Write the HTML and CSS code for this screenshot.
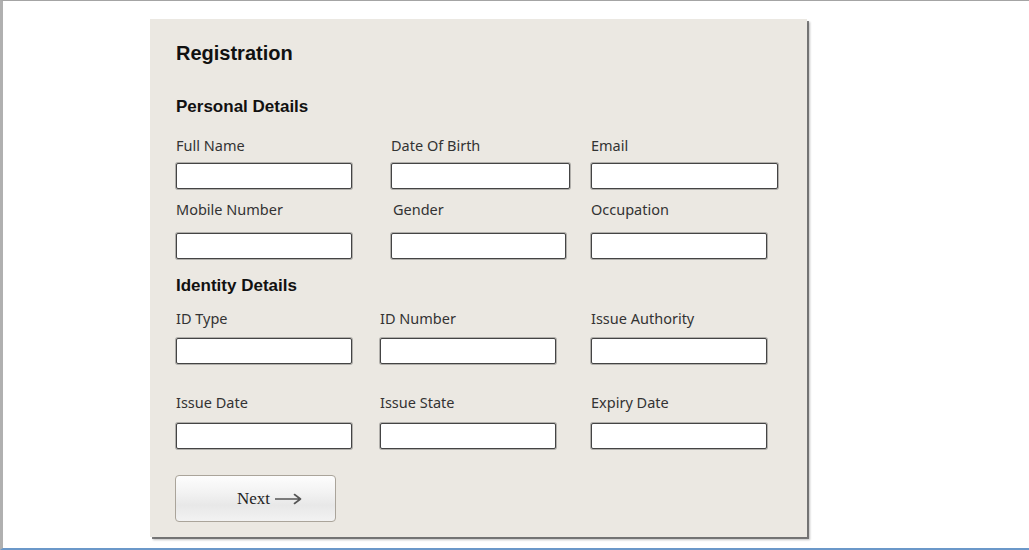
FILE: index.html
```html
<!DOCTYPE html>
<html lang="en">
<head>
<meta charset="utf-8">
<title>Registration</title>
<link rel="stylesheet" href="styles.css">
</head>
<body>
<div class="frame">
  <div class="panel">
    <h1 class="title">Registration</h1>

    <h2 class="section">Personal Details</h2>
    <div class="row row-personal row-a">
      <div class="field"><div class="label">Full Name</div><div class="input"></div></div>
      <div class="field"><div class="label">Date Of Birth</div><div class="input w179"></div></div>
      <div class="field"><div class="label">Email</div><div class="input w187"></div></div>
    </div>
    <div class="row row-personal row-b">
      <div class="field"><div class="label">Mobile Number</div><div class="input"></div></div>
      <div class="field"><div class="label indent">Gender</div><div class="input w175"></div></div>
      <div class="field"><div class="label">Occupation</div><div class="input"></div></div>
    </div>

    <h2 class="section section-identity">Identity Details</h2>
    <div class="row row-identity row-c">
      <div class="field"><div class="label">ID Type</div><div class="input"></div></div>
      <div class="field"><div class="label">ID Number</div><div class="input"></div></div>
      <div class="field"><div class="label">Issue Authority</div><div class="input"></div></div>
    </div>
    <div class="row row-identity row-d">
      <div class="field"><div class="label">Issue Date</div><div class="input"></div></div>
      <div class="field"><div class="label">Issue State</div><div class="input"></div></div>
      <div class="field"><div class="label">Expiry Date</div><div class="input"></div></div>
    </div>

    <button class="next" type="button">
      <span class="next-text">Next</span>
      <svg class="arrow" width="27" height="12" viewBox="0 0 27 12" aria-hidden="true">
        <path d="M0.5 6 H25.5 M19.5 1.5 L25.5 6 L19.5 10.5" fill="none" stroke="#555" stroke-width="1.6" stroke-linecap="round" stroke-linejoin="round"/>
      </svg>
    </button>
  </div>
</div>
</body>
</html>
```

FILE: styles.css
```css
html, body {
  margin: 0;
  padding: 0;
  background: #ffffff;
}

.frame {
  box-sizing: border-box;
  width: 1029px;
  height: 550px;
  border-top: 1px solid #a4a4a4;
  border-left: 3px solid #b0b0b0;
  border-bottom: 2px solid #6b98c9;
  background: #ffffff;
  overflow: hidden;
}

.panel {
  box-sizing: border-box;
  width: 657px;
  height: 518px;
  margin: 18px 0 0 147px;
  padding: 23px 0 0 26px;
  background: #ebe8e2;
  box-shadow: 2px 2px 0 rgba(90, 90, 90, 0.75), 3px 3px 2px rgba(0, 0, 0, 0.25);
  display: flex;
  flex-direction: column;
  align-items: flex-start;
}

.title {
  margin: 0;
  font-family: "Liberation Sans", Arial, sans-serif;
  font-size: 20px;
  line-height: 23px;
  font-weight: bold;
  color: #111;
}

.section {
  margin: 32px 0 0 0;
  font-family: "Liberation Sans", Arial, sans-serif;
  font-size: 17px;
  line-height: 19px;
  font-weight: bold;
  color: #111;
}

.section-identity {
  margin-top: 17px;
}

.row {
  display: grid;
  width: 100%;
}

.row-personal {
  grid-template-columns: 215px 200px 1fr;
}

.row-identity {
  grid-template-columns: 204px 211px 1fr;
}

.field {
  display: flex;
  flex-direction: column;
  align-items: flex-start;
}

.label {
  font-family: "Noto Sans", "Open Sans", sans-serif;
  font-size: 14.5px;
  line-height: 19px;
  color: #333;
  white-space: nowrap;
}

.label.indent {
  padding-left: 2px;
}

.input {
  box-sizing: border-box;
  width: 176px;
  height: 26px;
  background: #ffffff;
  border: 1px solid #444;
  border-radius: 2px;
  box-shadow: 0 0 0 1px rgba(70, 70, 70, 0.35);
}

.w175 { width: 175px; }
.w179 { width: 179px; }
.w187 { width: 187px; }

.row-a { margin-top: 20px; }
.row-a .label { margin-bottom: 8px; }

.row-b { margin-top: 11px; }
.row-b .label { margin-bottom: 14px; }

.row-c { margin-top: 14px; }
.row-c .label { margin-bottom: 10px; }

.row-d { margin-top: 29px; }
.row-d .label { margin-bottom: 11px; }

.next {
  box-sizing: border-box;
  margin: 26px 0 0 -1px;
  width: 161px;
  height: 47px;
  padding: 0 0 0 61px;
  display: flex;
  align-items: center;
  gap: 5px;
  border: 1px solid #aaa49a;
  border-radius: 4px;
  background: linear-gradient(to bottom, #fdfdfd 0%, #f3f3f3 35%, #e8e8e8 65%, #f2f2f2 100%);
  cursor: pointer;
}

.next-text {
  font-family: "Liberation Serif", "Times New Roman", serif;
  font-size: 17px;
  line-height: 20px;
  color: #222;
  margin-top: 1px;
}

.arrow {
  display: block;
}
```
